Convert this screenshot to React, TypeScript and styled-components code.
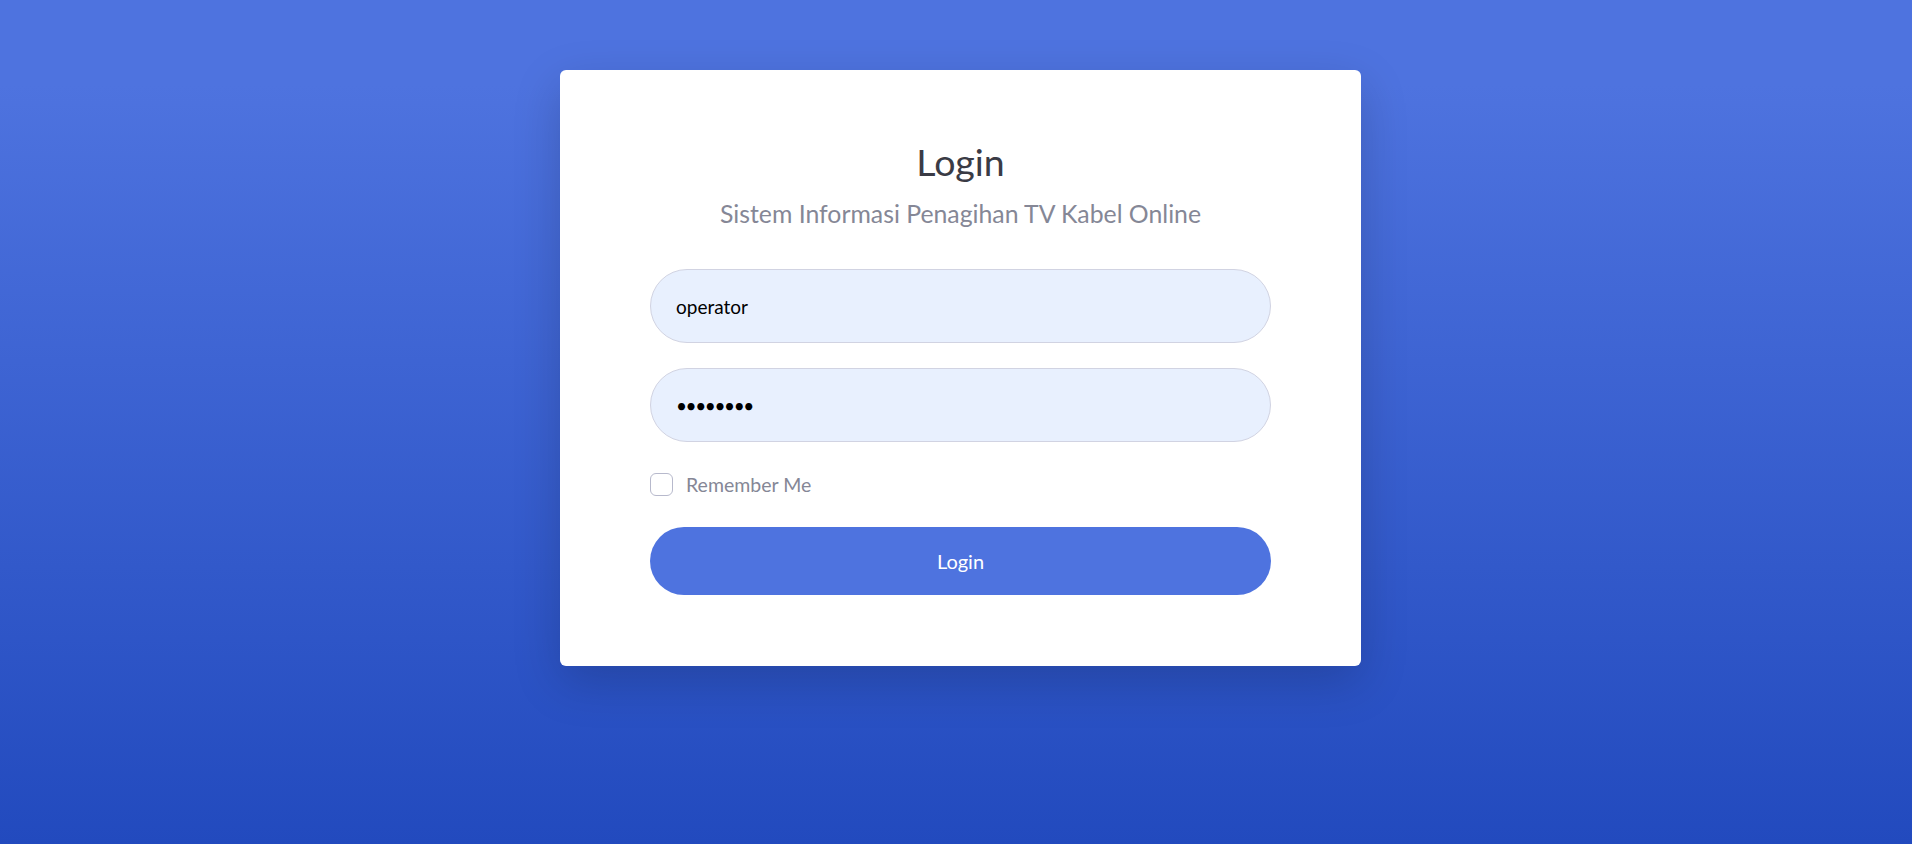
import React from "react";
import styled, { createGlobalStyle } from "styled-components";

const Global = createGlobalStyle`
  html, body { margin: 0; padding: 0; }
  body {
    font-family: Lato, "Noto Sans", sans-serif;
    background: linear-gradient(180deg, #4e73df 10%, #224abe 100%);
    min-height: 844px;
  }
  * { box-sizing: border-box; }
`;

const Page = styled.div`
  min-height: 844px;
  display: flex;
  justify-content: center;
  align-items: flex-start;
  padding: 70px 0 0 9px;
`;

const Card = styled.div`
  width: 801px;
  background: #fff;
  border-radius: 6px;
  box-shadow: 0 16px 48px rgba(0, 0, 0, 0.175);
  padding: 70px 90px 71px;
  display: flex;
  flex-direction: column;
`;

const Title = styled.h1`
  margin: 0;
  font-size: 37.5px;
  line-height: 44px;
  font-weight: 400;
  color: #3a3b45;
  text-align: center;
`;

const Subtitle = styled.p`
  margin: 14px 0 39px;
  font-size: 24.8px;
  line-height: 32px;
  color: #858796;
  text-align: center;
`;

const Form = styled.form`
  display: flex;
  flex-direction: column;
`;

const Input = styled.input<{ $mb?: number; $dots?: boolean }>`
  height: 74px;
  width: 100%;
  border: 1px solid #d1d3e2;
  border-radius: 160px;
  background: #e8f0fe;
  padding: 0 25px;
  font-family: Lato, "Noto Sans", sans-serif;
  font-size: 19px;
  letter-spacing: ${(p) => (p.$dots ? "-1.4px" : "0")};
  color: #000;
  outline: none;
  margin-bottom: ${(p) => p.$mb ?? 0}px;
`;

const CheckRow = styled.label`
  display: flex;
  align-items: center;
  gap: 13px;
  margin: 31px 0 31px;
  font-size: 19.5px;
  color: #858796;
`;

const Box = styled.span`
  width: 23px;
  height: 23px;
  border: 1px solid #b7b9cc;
  border-radius: 6px;
  background: #fff;
  flex: none;
`;

const Button = styled.button`
  height: 68px;
  width: 100%;
  border: none;
  border-radius: 160px;
  background: #4e73df;
  color: #fff;
  font-family: Lato, "Noto Sans", sans-serif;
  font-size: 20px;
`;

export default function App() {
  return (
    <>
      <Global />
      <Page>
        <Card>
          <Title>Login</Title>
          <Subtitle>Sistem Informasi Penagihan TV Kabel Online</Subtitle>
          <Form onSubmit={(e) => e.preventDefault()}>
            <Input type="text" defaultValue="operator" $mb={25} />
            <Input type="password" defaultValue="operator" $dots />
            <CheckRow>
              <Box />
              Remember Me
            </CheckRow>
            <Button type="button">Login</Button>
          </Form>
        </Card>
      </Page>
    </>
  );
}
